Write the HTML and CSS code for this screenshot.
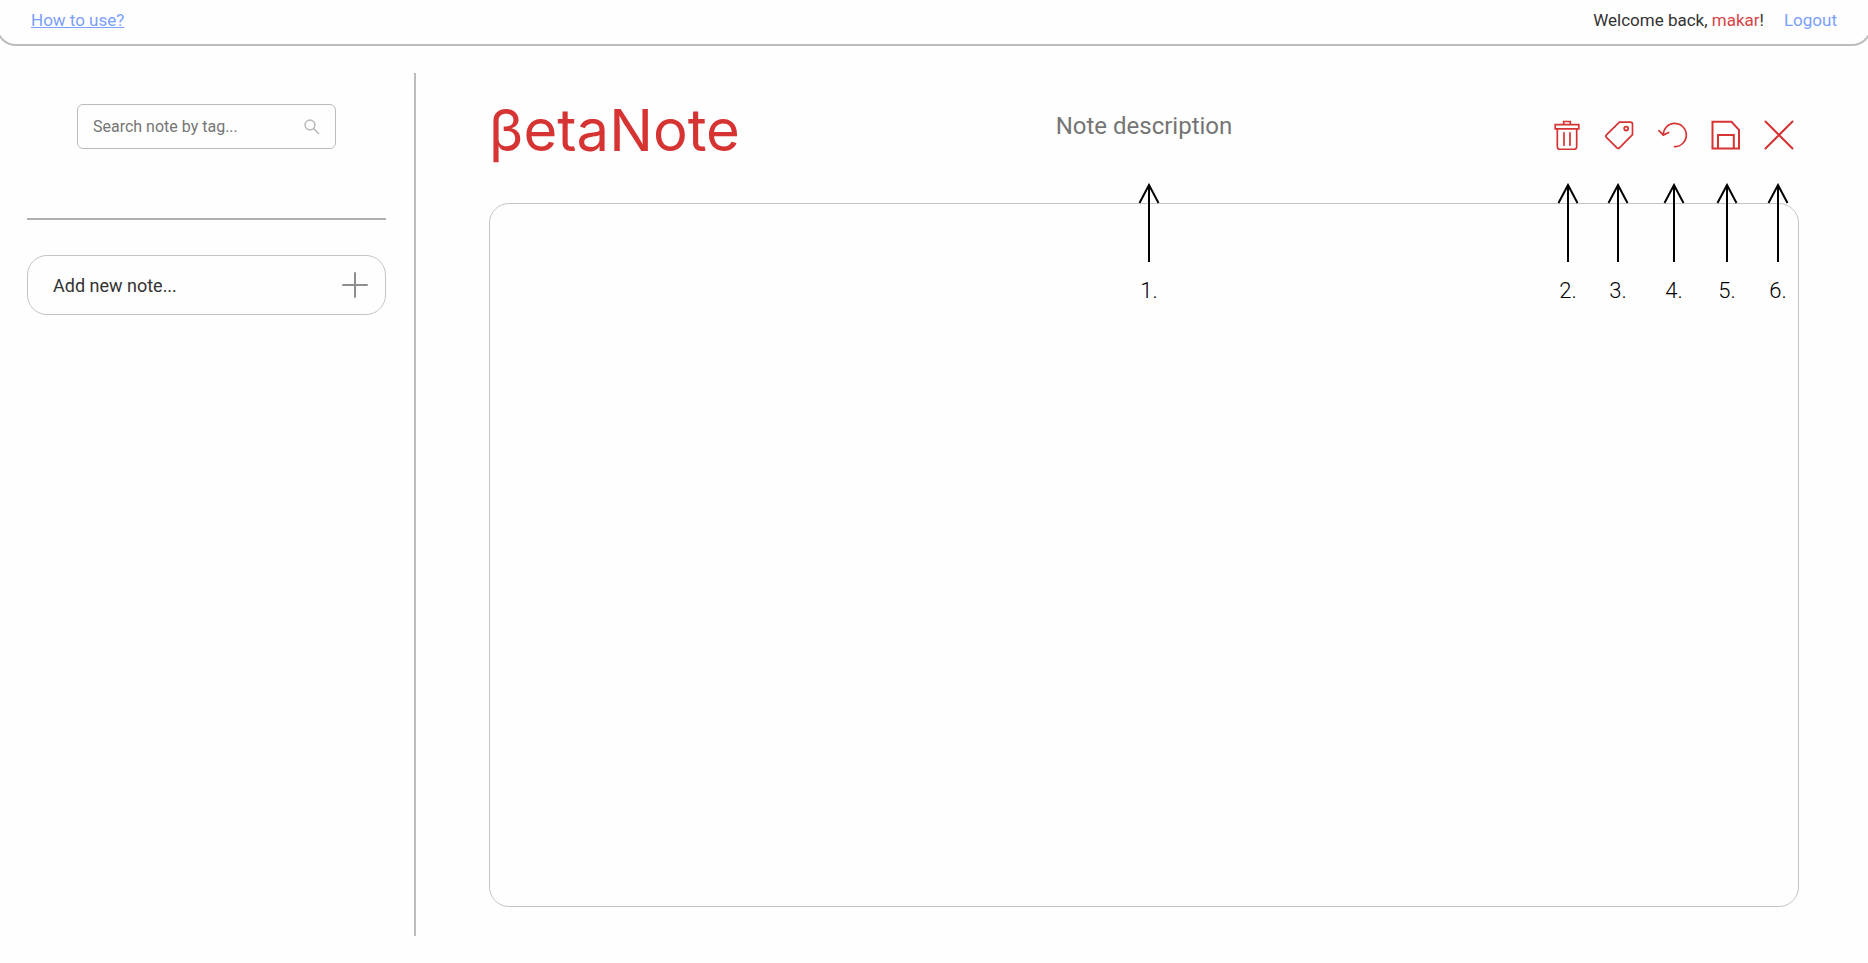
FILE: index.html
```html
<!DOCTYPE html>
<html lang="en">
<head>
<meta charset="utf-8">
<meta name="viewport" content="width=device-width, initial-scale=1">
<title>βetaNote</title>
<link rel="stylesheet" href="styles.css">
</head>
<body>
<header class="topbar">
  <a class="link link-help" href="#help">How to use?</a>
  <div class="account">
    <span>Welcome back, <span class="user">makar</span>!</span>
    <a class="link" href="#logout">Logout</a>
  </div>
</header>
<div class="layout">
  <aside class="sidebar">
    <form class="search">
      <input class="search-input" type="text" placeholder="Search note by tag..." aria-label="Search note by tag">
      <button class="search-button" type="submit" aria-label="Search">
        <svg width="16" height="16" viewBox="0 0 16 16" fill="none" stroke="#bdbdbd" stroke-width="1.6"><circle cx="6" cy="6" r="4.9"/><path d="M9.6 9.6 15 15"/></svg>
      </button>
    </form>
    <hr class="divider">
    <button class="add-note" type="button">
      <span>Add new note...</span>
      <svg width="26" height="26" viewBox="0 0 26 26" fill="none" stroke="#8e8e8e" stroke-width="2" stroke-linecap="round"><path d="M13 1v24M1 13h24"/></svg>
    </button>
  </aside>
  <main class="workspace">
    <div class="note-head">
      <h1 class="logo">βetaNote</h1>
      <input class="note-title" type="text" placeholder="Note description" aria-label="Note description">
      <div class="tools">
        <button class="tool" type="button" aria-label="Delete note">
          <svg viewBox="0 0 30 30"><path d="M3.200 4.600h23.600v4.200H3.200zM11.700 4.600V1.500h6.600v3.100M5.300 8.800v18q0 2.500 2.500 2.500h14.400q2.500 0 2.500-2.500v-18M12 12.800v12.400M18 12.800v12.400"/></svg>
        </button>
        <button class="tool" type="button" aria-label="Edit tags">
          <svg viewBox="0 0 30 30"><path d="M14.400 2.200h11.100q2 0 2 2v10.400L14.400 27.900q-1.200 1.200-2.400 0L1.400 17.300q-1.200-1.200 0-2.400z"/><circle cx="21.200" cy="8.600" r="2"/></svg>
        </button>
        <button class="tool" type="button" aria-label="Undo changes">
          <svg viewBox="0 0 30 30"><path d="M5.300 15C5.200 8.600 10.300 3.300 16.600 3.300a11.700 11.700 0 0 1 0 23.400M1 10.600l4.300 4.500 5.400-2.500"/></svg>
        </button>
        <button class="tool" type="button" aria-label="Save note">
          <svg viewBox="0 0 30 30"><path class="heavy" d="M1.500 1.800h19l7.500 8v18.700H1.500zM7 28.500V15h15.800v13.500"/></svg>
        </button>
        <button class="tool" type="button" aria-label="Close note">
          <svg viewBox="0 0 30 30"><path class="heavy" d="M1.500 1.500 28.500 28.500M28.500 1.500 1.500 28.500"/></svg>
        </button>
      </div>
    </div>
    <div class="editor-wrap">
      <textarea class="editor" aria-label="Note text"></textarea>
      <div class="callout callout-title"><svg viewBox="0 0 22 80"><path d="M11 79V2M1.5 20 11 2l9.5 18"/></svg><span>1.</span></div>
      <div class="callout callout-delete"><svg viewBox="0 0 22 80"><path d="M11 79V2M1.5 20 11 2l9.5 18"/></svg><span>2.</span></div>
      <div class="callout callout-tags"><svg viewBox="0 0 22 80"><path d="M11 79V2M1.5 20 11 2l9.5 18"/></svg><span>3.</span></div>
      <div class="callout callout-undo"><svg viewBox="0 0 22 80"><path d="M11 79V2M1.5 20 11 2l9.5 18"/></svg><span>4.</span></div>
      <div class="callout callout-save"><svg viewBox="0 0 22 80"><path d="M11 79V2M1.5 20 11 2l9.5 18"/></svg><span>5.</span></div>
      <div class="callout callout-close"><svg viewBox="0 0 22 80"><path d="M11 79V2M1.5 20 11 2l9.5 18"/></svg><span>6.</span></div>
    </div>
  </main>
</div>
</body>
</html>
```
FILE: styles.css
```css
* { box-sizing: border-box; }

body {
  margin: 0;
  min-height: 100vh;
  display: flex;
  flex-direction: column;
  overflow-x: hidden;
  background: #fefefe;
  color: #333;
  font-family: Roboto, "Liberation Sans", sans-serif;
}

button, input, textarea {
  font-family: inherit;
  background: none;
  border: 0;
  padding: 0;
  margin: 0;
}

button { cursor: pointer; }
svg { display: block; }

.topbar {
  display: flex;
  justify-content: space-between;
  align-items: center;
  margin: 0 -4px;
  padding: 8px 33px 12px;
  border: 2px solid #bcbcbc;
  border-top: 0;
  border-radius: 0 0 20px 20px;
  font-size: 17px;
  line-height: 24px;
}

.account { display: flex; gap: 20px; }
.link { color: #7a9fff; text-decoration: none; }
.link-help { text-decoration: underline; }
.user { color: #d64545; }

.layout {
  flex: 1;
  display: flex;
  padding: 27px 0 27px;
}

.sidebar {
  width: 416px;
  padding: 31px 28px 0 27px;
  border-right: 2px solid #bcbcbc;
}

.search {
  display: flex;
  align-items: center;
  height: 45px;
  margin: 0 50px;
  padding: 0 15px;
  border: 1px solid #bcbcbc;
  border-radius: 6px;
}

.search-input {
  flex: 1;
  min-width: 0;
  font-size: 16px;
  outline: 0;
}

.search-input::placeholder, .note-title::placeholder { color: #757575; opacity: 1; }

.divider {
  height: 2px;
  margin: 69px 0 35px;
  border: 0;
  background: #b0b0b0;
}

.add-note {
  display: flex;
  justify-content: space-between;
  align-items: center;
  width: 100%;
  height: 60px;
  padding: 0 17px 0 25px;
  border: 1px solid #c4c4c4;
  border-radius: 20px;
  color: #333;
  font-size: 18px;
}

.workspace {
  flex: 1;
  display: flex;
  flex-direction: column;
  padding: 31px 69px 29px 73px;
}

.note-head {
  display: grid;
  grid-template-columns: 1fr 400px 1fr;
  align-items: start;
  height: 99px;
}

.logo {
  margin: 0;
  color: #d63333;
  font-family: Inter, Lato, sans-serif;
  font-size: 58px;
  font-weight: 400;
  line-height: 52px;
}

.note-title {
  height: 44px;
  font-size: 24px;
  text-align: center;
  outline: 0;
}

.tools {
  display: flex;
  justify-content: flex-end;
  gap: 23px;
  padding: 16px 5px 0 0;
}

.tool { width: 30px; height: 30px; }
.tool svg {
  width: 30px;
  height: 30px;
  fill: none;
  stroke: #d63333;
  stroke-width: 1.7;
  stroke-linecap: round;
}
.tool .heavy { stroke-width: 2; }

.editor-wrap {
  position: relative;
  flex: 1;
  display: flex;
}

.editor {
  flex: 1;
  padding: 24px;
  border: 1px solid #c4c4c4;
  border-radius: 20px;
  font-size: 18px;
  resize: none;
  outline: 0;
}

/* Numbered pointers laid over the editor's top edge */
.callout {
  position: absolute;
  top: -20px;
  width: 22px;
  display: flex;
  flex-direction: column;
  align-items: center;
  gap: 15px;
  color: #000;
  font-size: 22px;
  font-weight: 300;
  line-height: 26px;
  pointer-events: none;
}

.callout svg {
  width: 22px;
  height: 80px;
  fill: none;
  stroke: #000;
  stroke-width: 2;
}

.callout-title { left: calc(50% - 6px); }
.callout-delete { right: 220px; }
.callout-tags { right: 170px; }
.callout-undo { right: 114px; }
.callout-save { right: 61px; }
.callout-close { right: 10px; }
```
